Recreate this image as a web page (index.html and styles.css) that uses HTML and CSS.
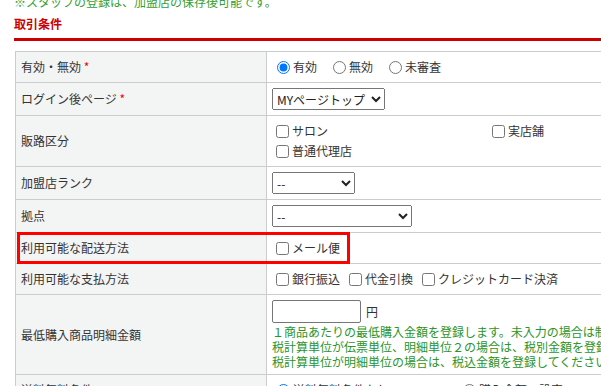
FILE: index.html
```html
<!DOCTYPE html>
<html lang="ja">
<head>
    <meta charset="UTF-8">
    <title>加盟店編集</title>
    <link rel="stylesheet" href="styles.css">
</head>
<body>
    <p class="notice">※スタッフの登録は、加盟店の保存後可能です。</p>
    <h2 class="section-title">取引条件</h2>

    <div class="form-area">
        <table class="form-table">
            <colgroup>
                <col class="col-label">
                <col>
            </colgroup>
            <tr>
                <th>有効・無効 <span class="required">*</span></th>
                <td>
                    <div class="options">
                        <label class="radio"><input type="radio" name="status" checked>有効</label>
                        <label class="radio"><input type="radio" name="status">無効</label>
                        <label class="radio"><input type="radio" name="status">未審査</label>
                    </div>
                </td>
            </tr>
            <tr>
                <th>ログイン後ページ <span class="required">*</span></th>
                <td>
                    <select class="select-top">
                        <option>MYページトップ</option>
                    </select>
                </td>
            </tr>
            <tr>
                <th>販路区分</th>
                <td>
                    <div class="check-grid">
                        <label class="check"><input type="checkbox">サロン</label>
                        <label class="check"><input type="checkbox">実店舗</label>
                        <label class="check"><input type="checkbox">普通代理店</label>
                    </div>
                </td>
            </tr>
            <tr>
                <th>加盟店ランク</th>
                <td>
                    <select class="select-rank">
                        <option>--</option>
                    </select>
                </td>
            </tr>
            <tr>
                <th>拠点</th>
                <td>
                    <select class="select-base">
                        <option>--</option>
                    </select>
                </td>
            </tr>
            <tr>
                <th>利用可能な配送方法</th>
                <td>
                    <div class="options">
                        <label class="check"><input type="checkbox">メール便</label>
                    </div>
                </td>
            </tr>
            <tr>
                <th>利用可能な支払方法</th>
                <td>
                    <div class="options">
                        <label class="check"><input type="checkbox">銀行振込</label>
                        <label class="check"><input type="checkbox">代金引換</label>
                        <label class="check"><input type="checkbox">クレジットカード決済</label>
                    </div>
                </td>
            </tr>
            <tr>
                <th>最低購入商品明細金額</th>
                <td>
                    <div class="amount">
                        <input type="text" class="amount-input">
                        <span>円</span>
                    </div>
                    <p class="hint">１商品あたりの最低購入金額を登録します。未入力の場合は制限なしとなります。<br>
                    税計算単位が伝票単位、明細単位２の場合は、税別金額を登録してください。<br>
                    税計算単位が明細単位の場合は、税込金額を登録してください。</p>
                </td>
            </tr>
            <tr>
                <th>送料無料条件</th>
                <td>
                    <div class="options">
                        <label class="radio wide"><input type="radio" name="free" checked>送料無料条件なし</label>
                        <label class="radio"><input type="radio" name="free">購入金額で設定</label>
                    </div>
                </td>
            </tr>
        </table>

        <!-- annotation box -->
        <div class="highlight"></div>
    </div>
</body>
</html>
```

FILE: styles.css
```css
html {
    overflow: hidden;
}
body {
    margin: 0;
    padding: 0 0 0 14px;
    font-family: "Noto Sans CJK JP", "Noto Sans", sans-serif;
    font-size: 12px;
    color: #333;
    background: #fff;
    width: 1000px;
}
.notice {
    margin: -7px 0 0;
    line-height: 18px;
    color: #33a033;
}
.section-title {
    margin: 4px 0 0;
    padding-bottom: 5px;
    font-size: 12px;
    line-height: 18px;
    font-weight: bold;
    color: #cc0000;
    border-bottom: 3px solid #cc0000;
}
.form-area {
    position: relative;
    margin-top: 10px;
    margin-left: 1px;
}
.form-table {
    width: 900px;
    border-collapse: collapse;
    table-layout: fixed;
}
.col-label {
    width: 251px;
}
.form-table th,
.form-table td {
    border: 1px solid #cccccc;
    padding: 5px;
    line-height: 20px;
    vertical-align: middle;
}
.form-table th {
    background: #f3f4f4;
    font-weight: normal;
    text-align: left;
    color: #333;
}
.required {
    color: #ff0000;
}
.options {
    display: flex;
    align-items: center;
}
.radio,
.check {
    display: flex;
    align-items: center;
    height: 20px;
}
.radio {
    margin-right: 11px;
}
.radio.wide {
    width: 175px;
}
.check {
    margin-right: 5px;
}
.radio input,
.check input {
    margin-top: 0;
    margin-bottom: 0;
    width: 13px;
    height: 13px;
}
.check-grid {
    display: grid;
    grid-template-columns: 216px 216px;
}
select {
    height: 22px;
    font-family: "Noto Sans CJK JP", "Noto Sans", sans-serif;
    font-size: 12px;
    color: #222;
    display: block;
}
.select-top {
    width: 113px;
}
.select-rank {
    width: 83px;
}
.select-base {
    width: 140px;
}
.amount {
    display: flex;
    align-items: center;
    gap: 5px;
    line-height: 23px;
}
.amount-input {
    width: 89px;
    height: 23px;
    box-sizing: border-box;
    border: 1px solid #767676;
    border-radius: 2px;
    margin: 0;
}
.hint {
    margin: 1px 0 0;
    line-height: 15px;
    color: #2a952a;
    white-space: nowrap;
}
.highlight {
    position: absolute;
    left: 2px;
    top: 181px;
    width: 333px;
    height: 32px;
    box-sizing: border-box;
    border: 3px solid #ff0000;
}
```
